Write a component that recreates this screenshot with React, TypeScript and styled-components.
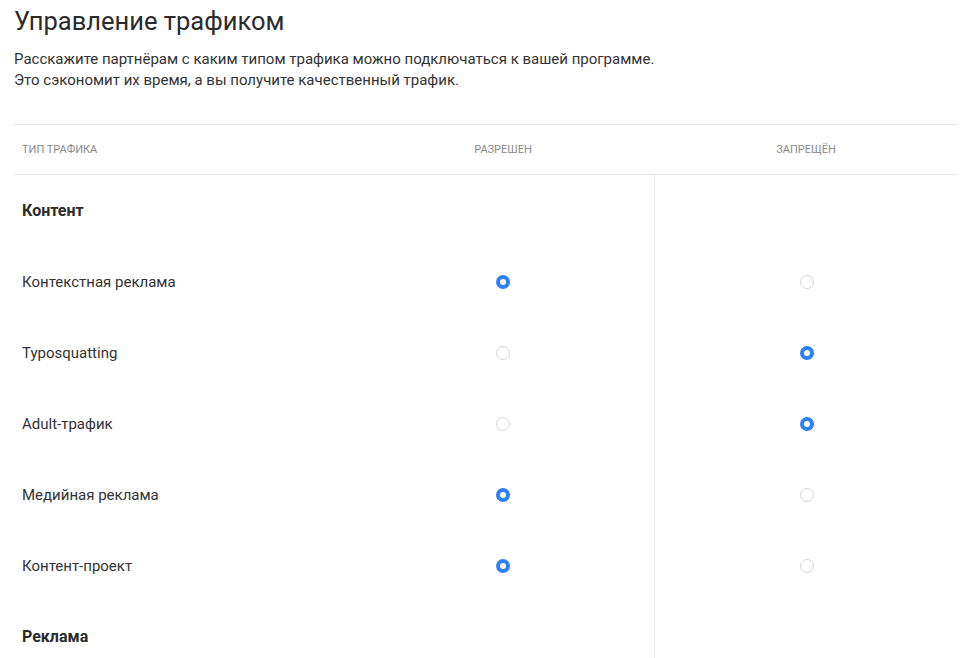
import React from "react";
import styled, { createGlobalStyle } from "styled-components";

const Global = createGlobalStyle`
  html, body { margin: 0; padding: 0; background: #fff; }
  body { font-family: Roboto, "Noto Sans", Arial, sans-serif; color: #333; }
`;

const Page = styled.div`
  width: 944px;
  padding: 6px 0 0 14px;
`;

const Title = styled.h1`
  margin: 0;
  font-size: 25.5px;
  line-height: 30px;
  font-weight: 400;
  color: #2b2b2b;
`;

const Lead = styled.p`
  margin: 13px 0 0;
  font-size: 15px;
  line-height: 21px;
  color: #333;
`;

const Table = styled.div`
  margin-top: 33px;
  display: grid;
  grid-template-columns: 338px 302px 1fr;
  border-top: 1px solid #e8e8e8;
`;

const HeadCell = styled.div<{ $center?: boolean }>`
  height: 49px;
  border-bottom: 1px solid #e8e8e8;
  display: flex;
  align-items: center;
  justify-content: ${(p) => (p.$center ? "center" : "flex-start")};
  padding-left: ${(p) => (p.$center ? "0" : "8px")};
  font-size: 11px;
  text-transform: uppercase;
  color: #8a8a8a;
`;

const Cell = styled.div<{ $center?: boolean; $divider?: boolean; $bold?: boolean }>`
  height: 71px;
  display: flex;
  align-items: center;
  justify-content: ${(p) => (p.$center ? "center" : "flex-start")};
  padding-left: ${(p) => (p.$center ? "0" : "8px")};
  border-left: ${(p) => (p.$divider ? "1px solid #e8e8e8" : "none")};
  font-size: ${(p) => (p.$bold ? "16px" : "15px")};
  font-weight: ${(p) => (p.$bold ? 700 : 400)};
  color: ${(p) => (p.$bold ? "#2b2b2b" : "#333")};
`;

const Radio = styled.span<{ $on: boolean }>`
  box-sizing: border-box;
  width: 14px;
  height: 14px;
  border-radius: 50%;
  border: ${(p) => (p.$on ? "4.5px solid #2f80f7" : "1px solid #d6d6de")};
  background: #fff;
  display: inline-block;
`;

type Row =
  | { kind: "section"; label: string }
  | { kind: "item"; label: string; allowed: boolean };

const rows: Row[] = [
  { kind: "section", label: "Контент" },
  { kind: "item", label: "Контекстная реклама", allowed: true },
  { kind: "item", label: "Typosquatting", allowed: false },
  { kind: "item", label: "Adult-трафик", allowed: false },
  { kind: "item", label: "Медийная реклама", allowed: true },
  { kind: "item", label: "Контент-проект", allowed: true },
  { kind: "section", label: "Реклама" },
];

export default function App() {
  return (
    <>
      <Global />
      <Page>
        <Title>Управление трафиком</Title>
        <Lead>
          Расскажите партнёрам с каким типом трафика можно подключаться к вашей программе.
          <br />
          Это сэкономит их время, а вы получите качественный трафик.
        </Lead>
        <Table>
          <HeadCell>Тип трафика</HeadCell>
          <HeadCell $center>Разрешен</HeadCell>
          <HeadCell $center>Запрещён</HeadCell>
          {rows.map((r, i) =>
            r.kind === "section" ? (
              <React.Fragment key={i}>
                <Cell $bold>{r.label}</Cell>
                <Cell $center />
                <Cell $center $divider />
              </React.Fragment>
            ) : (
              <React.Fragment key={i}>
                <Cell>{r.label}</Cell>
                <Cell $center>
                  <Radio $on={r.allowed} />
                </Cell>
                <Cell $center $divider>
                  <Radio $on={!r.allowed} />
                </Cell>
              </React.Fragment>
            )
          )}
        </Table>
      </Page>
    </>
  );
}
